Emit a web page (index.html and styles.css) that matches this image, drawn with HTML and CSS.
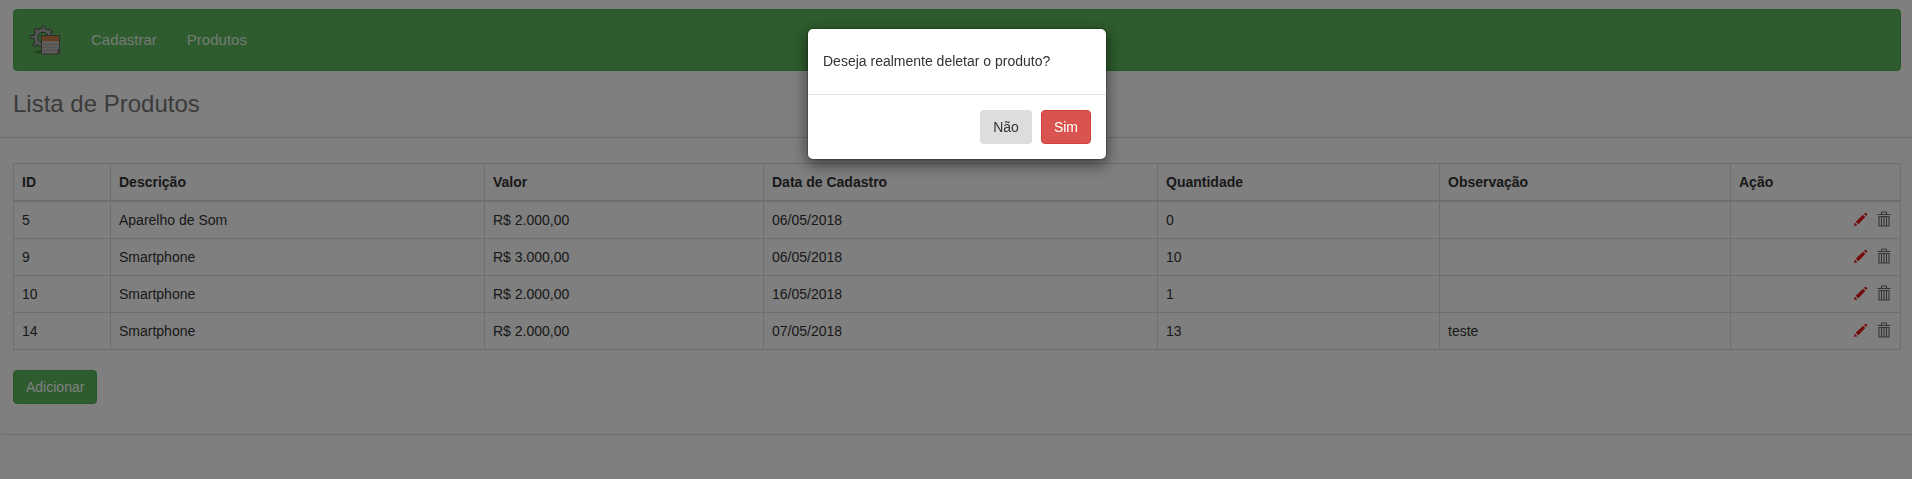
FILE: index.html
```html
<!DOCTYPE html>
<html lang="pt-BR">
<head>
<meta charset="utf-8">
<title>Lista de Produtos</title>
<link rel="stylesheet" href="styles.css">
</head>
<body>
<svg class="sprite" aria-hidden="true">
  <symbol id="pencil" viewBox="0 0 16 16">
    <path d="M1 15l1-3.700L4.700 14zM2.900 10.300L10.700 2.900l2.400 2.400L5.700 13.100zM11.700 2l1-.9q.7-.6 1.400 0l.8.8q.7.7 0 1.400l-.9 1z"/>
  </symbol>
  <symbol id="trash" viewBox="0 0 14 16">
    <path d="M.5 3.500h13M4.500 3V1.500q0-.5.500-.5h4q.5 0 .5.500V3M2 5.500v9.500h10V5.500zM4.500 5.500v10M7 5.500v10M9.500 5.500v10" fill="none" stroke="currentColor" stroke-width="1.100"/>
  </symbol>
</svg>
<div class="panel">
  <main class="panel-top">
    <nav class="navbar">
      <a class="brand" href="#">
        <svg width="32" height="32" viewBox="0 0 32 32">
          <ellipse cx="16" cy="28" rx="11" ry="2" fill="#000" opacity=".25"/>
          <g fill="none" stroke="#505550" stroke-width="4"><path d="M14.500 6V1.500M20 8l2.500-2.500M8.500 8L5.500 5M5.500 13H1M7.500 19l-3 3"/><circle cx="14" cy="13.500" r="7.300" stroke-width="5"/></g>
          <g fill="none" stroke="#a8aaaa" stroke-width="2"><path d="M14.500 6V2.300M20 8l2-2M8.500 8L6 5.500M5.500 13H1.800M7.500 19L5 21.500"/><circle cx="14" cy="13.500" r="7.300" stroke-width="3"/></g>
          <rect x="12.500" y="11.500" width="18" height="18.500" fill="#bfbdbb" stroke="#59605a"/>
          <path d="M13 12h17v5H13z" fill="#cc7c44"/>
          <path d="M14 20.500h15M14 23.500h14M14 26.500h13" stroke="#a5a3a1"/>
          <path d="M30 24.500L27 26l1.500 1.500-1.500 2h3z" fill="#858381"/>
        </svg>
      </a>
      <a class="nav-link" href="#">Cadastrar</a>
      <a class="nav-link" href="#">Produtos</a>
    </nav>
    <h1 class="title">Lista de Produtos</h1>
  </main>
  <section class="panel-body">
    <table class="table">
      <colgroup><col class="c-id"><col class="c-desc"><col class="c-value"><col class="c-date"><col class="c-qty"><col class="c-obs"><col class="c-action"></colgroup>
      <thead><tr><th>ID</th><th>Descrição</th><th>Valor</th><th>Data de Cadastro</th><th>Quantidade</th><th>Observação</th><th>Ação</th></tr></thead>
      <tbody>
        <tr><td>5</td><td>Aparelho de Som</td><td>R$ 2.000,00</td><td>06/05/2018</td><td>0</td><td></td><td><div class="actions"><svg class="edit"><use href="#pencil"/></svg><svg class="delete"><use href="#trash"/></svg></div></td></tr>
        <tr><td>9</td><td>Smartphone</td><td>R$ 3.000,00</td><td>06/05/2018</td><td>10</td><td></td><td><div class="actions"><svg class="edit"><use href="#pencil"/></svg><svg class="delete"><use href="#trash"/></svg></div></td></tr>
        <tr><td>10</td><td>Smartphone</td><td>R$ 2.000,00</td><td>16/05/2018</td><td>1</td><td></td><td><div class="actions"><svg class="edit"><use href="#pencil"/></svg><svg class="delete"><use href="#trash"/></svg></div></td></tr>
        <tr><td>14</td><td>Smartphone</td><td>R$ 2.000,00</td><td>07/05/2018</td><td>13</td><td>teste</td><td><div class="actions"><svg class="edit"><use href="#pencil"/></svg><svg class="delete"><use href="#trash"/></svg></div></td></tr>
      </tbody>
    </table>
    <a class="btn btn-success" href="#">Adicionar</a>
  </section>
</div>
<div class="backdrop">
  <div class="modal" role="dialog">
    <div class="modal-body">Deseja realmente deletar o produto?</div>
    <div class="modal-footer">
      <button class="btn btn-plain">Não</button>
      <button class="btn btn-danger">Sim</button>
    </div>
  </div>
</div>
</body>
</html>
```
FILE: styles.css
```css
* { box-sizing: border-box; }
body {
  margin: 0;
  font: 14px/20px "Liberation Sans", Arial, sans-serif;
  color: #333;
  background: #fff;
  overflow: hidden;
}
a { text-decoration: none; }
.sprite { display: none; }
.panel {
  height: 435px;
  padding: 0 1px;
  border-bottom: 1px solid #ddd;
  border-radius: 0 0 0 4px;
  box-shadow: 0 1px 1px rgba(0, 0, 0, .05);
}
.panel-top {
  height: 138px;
  margin: 0 -1px;
  padding: 9px 11px 0 13px;
  border-bottom: 1px solid #ddd;
}
.navbar {
  display: flex;
  align-items: center;
  height: 62px;
  padding-left: 15px;
  border: 1px solid #4cae4c;
  border-radius: 4px;
  background: #5cb85c;
}
.brand { display: flex; width: 47px; }
.nav-link {
  padding: 0 15px;
  font-size: 15px;
  color: #fff;
  opacity: .85;
}
.title {
  margin: 20px 0 0;
  font-size: 24px;
  line-height: 26px;
  font-weight: 400;
  color: #777;
}
.panel-body { padding: 25px 10px 0 12px; }
.table {
  width: 1888px;
  table-layout: fixed;
  border-collapse: collapse;
  margin-bottom: 20px;
}
.c-id { width: 97px; }
.c-desc { width: 374px; }
.c-value { width: 279px; }
.c-date { width: 394px; }
.c-qty { width: 282px; }
.c-obs { width: 291px; }
.c-action { width: 170px; }
.table th, .table td {
  padding: 8px;
  border: 1px solid #ddd;
  text-align: left;
  line-height: 20px;
}
.table th { border-bottom-width: 2px; }
.actions {
  display: flex;
  justify-content: flex-end;
  align-items: flex-start;
  gap: 8px;
  height: 20px;
  padding: 1px 1px 0 0;
}
.edit { width: 15px; height: 15px; margin: 1px 1px 0 0; fill: #e8191c; }
.delete { width: 14px; height: 16px; color: #706c66; }
.btn {
  display: inline-block;
  padding: 6px 12px;
  border: 1px solid transparent;
  border-radius: 4px;
  font: 14px/20px "Liberation Sans", Arial, sans-serif;
  color: #fff;
}
.btn-success { background: #5cb85c; border-color: #4cae4c; }
.btn-danger { background: #d9534f; border-color: #d43f3a; }
.btn-plain { background: #ddd; color: #333; }
.backdrop {
  position: fixed;
  inset: 0;
  display: flex;
  justify-content: center;
  align-items: flex-start;
  padding: 28px 0 0 2px;
  background: rgba(0, 0, 0, .5);
}
.modal {
  width: 300px;
  border: 1px solid rgba(0, 0, 0, .2);
  border-radius: 6px;
  background: #fff;
  background-clip: padding-box;
  box-shadow: 0 5px 15px rgba(0, 0, 0, .5);
}
.modal-body { padding: 22px 15px 23px; }
.modal-footer {
  display: flex;
  justify-content: flex-end;
  gap: 9px;
  padding: 15px;
  border-top: 1px solid #e5e5e5;
}
```
